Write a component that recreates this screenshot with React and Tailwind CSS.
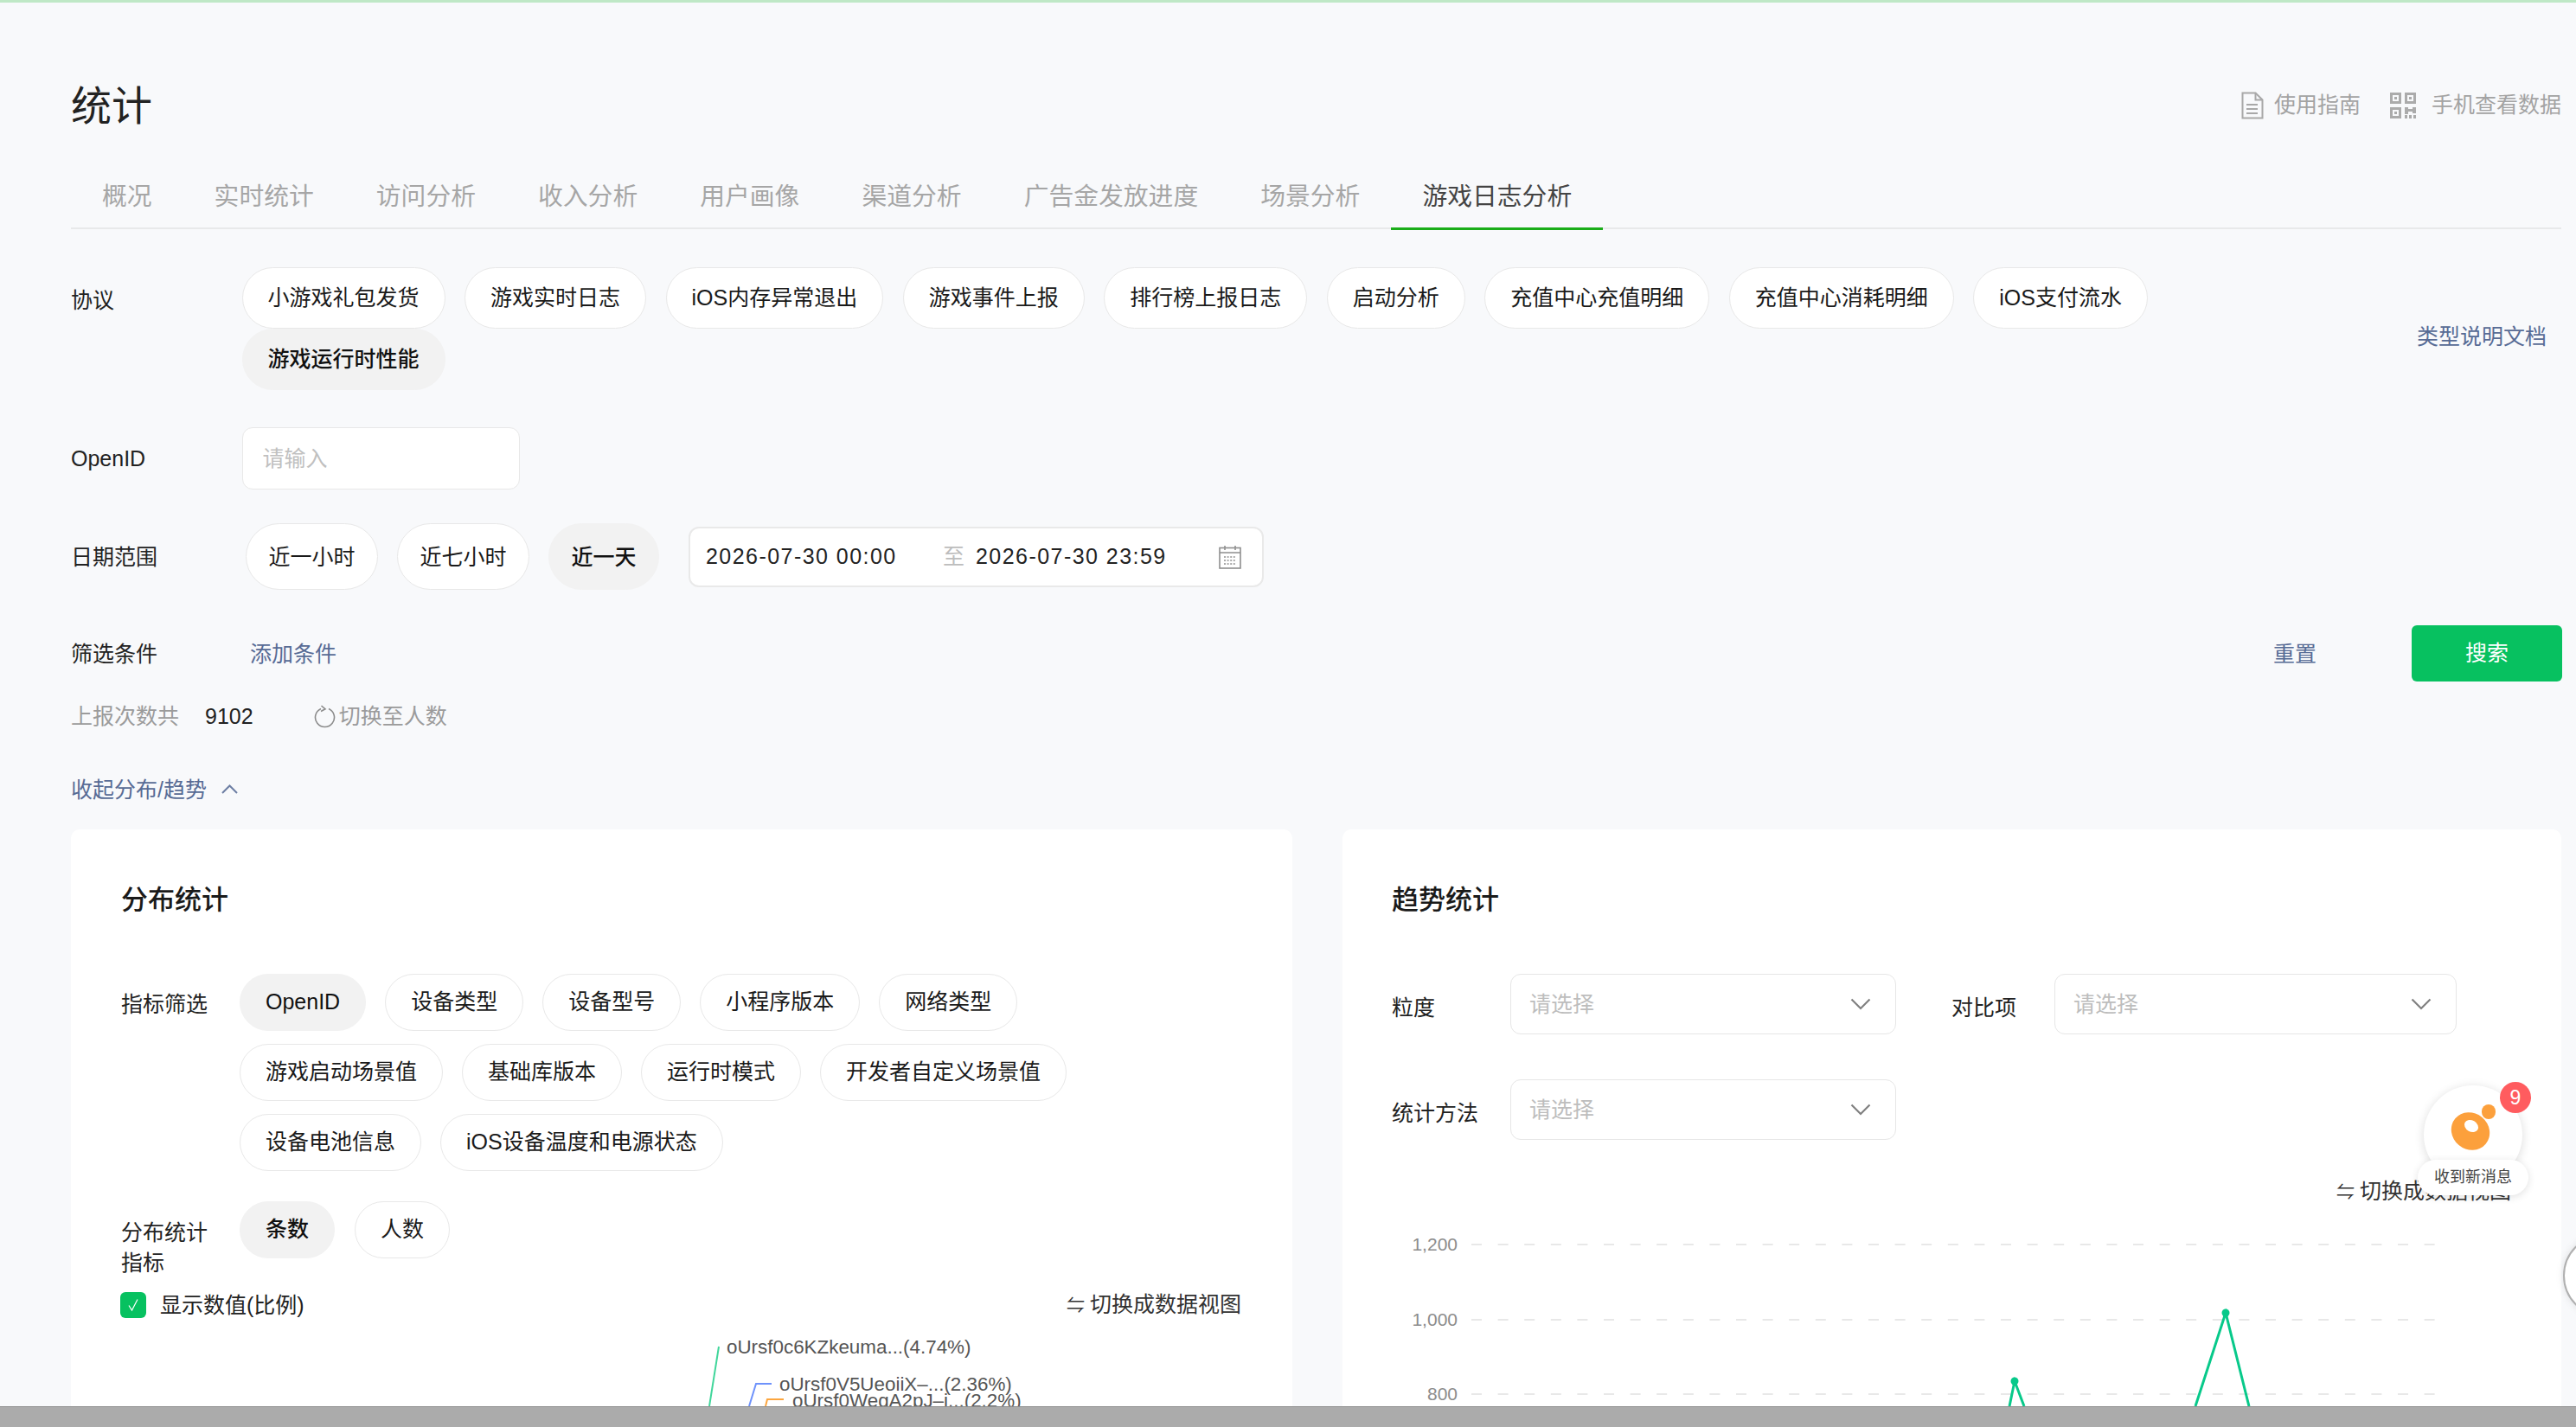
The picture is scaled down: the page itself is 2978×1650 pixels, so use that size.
const Pill = ({ children, active, className = "" }) => (
  <div
    className={`flex items-center justify-center rounded-full whitespace-nowrap text-[25px] px-[29px] ${
      active ? "bg-[#f2f2f2] border border-[#f2f2f2] font-medium text-[#111]" : "bg-white border border-[#e8e8e8] text-[#1a1a1a]"
    } ${className}`}
  >
    {children}
  </div>
);

const tabs = ["概况", "实时统计", "访问分析", "收入分析", "用户画像", "渠道分析", "广告金发放进度", "场景分析", "游戏日志分析"];
const protocols = ["小游戏礼包发货", "游戏实时日志", "iOS内存异常退出", "游戏事件上报", "排行榜上报日志", "启动分析", "充值中心充值明细", "充值中心消耗明细", "iOS支付流水", "游戏运行时性能"];
const metrics = ["OpenID", "设备类型", "设备型号", "小程序版本", "网络类型", "游戏启动场景值", "基础库版本", "运行时模式", "开发者自定义场景值", "设备电池信息", "iOS设备温度和电源状态"];

const Chevron = () => (
  <svg width="24" height="14" viewBox="0 0 24 14" fill="none" stroke="#808080" strokeWidth="2.2">
    <path d="M1.5 1.5 12 12 22.5 1.5" />
  </svg>
);

const Select = ({ w }) => (
  <div className={`flex items-center justify-between h-[70px] bg-white border border-[#e6e6e6] rounded-[12px] pl-[21px] pr-[28px] text-[25px] text-[#bdbdbd] ${w}`}>
    <span className="pt-[1px]">请选择</span>
    <Chevron />
  </div>
);

const Toggle = ({ className = "" }) => (
  <div className={`flex items-center text-[25px] text-[#333] whitespace-nowrap ${className}`}>
    <span className="text-[21px] mr-[6px]">⇋</span>
    <span>切换成数据视图</span>
  </div>
);

export default function App() {
  return (
    <div
      className="relative flex flex-col h-[1650px] w-full overflow-hidden bg-[#f8f9fb] text-[25px] text-[#222]"
      style={{ fontFamily: '"Liberation Sans","Noto Sans CJK SC",sans-serif' }}
    >
      <div className="h-[3px] bg-[#bfe8c6] shrink-0" />
      <main className="flex-1 min-h-0 overflow-hidden pl-[82px] pr-[17px]">
        <div className="flex items-center justify-between mt-[86px] h-[66px]">
          <h1 className="text-[47px] text-[#222] font-normal pt-[2px]">统计</h1>
          <div className="flex items-center text-[25px] text-[#a3a3a3]">
            <svg className="ml-[2px]" width="26" height="32" viewBox="0 0 26 32" fill="none" stroke="#a8a8a8" strokeWidth="2">
              <path d="M1.5 1.5h15l8 8v21h-23z" />
              <path d="M16.5 1.5v8h8" />
              <path d="M6 15h13M6 20h13M6 25h13" />
            </svg>
            <span className="ml-[12px]">使用指南</span>
            <svg className="ml-[34px]" width="30" height="30" viewBox="0 0 30 30" fill="#ababab">
              <path fillRule="evenodd" d="M0 0h13v13H0zM3 3v7h7V3zM17 0h13v13H17zM20 3v7h7V3zM0 17h13v13H0zM3 20v7h7v-7z" />
              <path d="M5 5h3v3H5zM22 5h3v3h-3zM5 22h3v3H5zM17 17h4v8h-4zM21 19h5v3h-5zM26 17h4v7h-4zM22 26h3v4h-3zM27 26h3v4h-3zM17 26h3v4h-3z" />
            </svg>
            <span className="ml-[18px]">手机查看数据</span>
          </div>
        </div>

        <div className="flex mt-[35px] h-[75px] border-b-2 border-[#e8e9ea]">
          {tabs.map((t, i) => {
            const active = i === tabs.length - 1;
            return (
              <div
                key={t}
                className={`h-[76px] px-[36px] leading-[74px] text-[28.8px] whitespace-nowrap ${
                  active ? "border-b-[3px] border-[#1aad19] text-[#444]" : "text-[#a6a6a6]"
                }`}
              >
                {t}
              </div>
            );
          })}
        </div>

        <div className="flex mt-[44px]">
          <div className="w-[197.5px] shrink-0 h-[71px] leading-[76px]">协议</div>
          <div className="flex flex-wrap w-[2330px] gap-x-[22.5px]">
            {protocols.map((p, i) => (
              <Pill key={p} active={i === protocols.length - 1} className="h-[71px] pt-[1px]">
                {p}
              </Pill>
            ))}
          </div>
          <a className="ml-auto mr-[17px] self-center mt-[20px] text-[#576b95] whitespace-nowrap">类型说明文档</a>
        </div>

        <div className="flex items-center mt-[43px] h-[72px]">
          <div className="w-[197.5px] shrink-0 pt-[2px]">OpenID</div>
          <div className="flex items-center w-[321px] h-[72px] bg-white border border-[#e8e8e8] rounded-[12px] pl-[23px] pt-[2px] text-[#c0c0c0]">请输入</div>
        </div>

        <div className="flex items-center mt-[39px] h-[77px]">
          <div className="w-[202px] shrink-0 pt-[2px]">日期范围</div>
          <div className="flex gap-x-[22px]">
            <Pill className="h-[77px] w-[153px] !px-0 pt-[2px]">近一小时</Pill>
            <Pill className="h-[77px] w-[153px] !px-0 pt-[2px]">近七小时</Pill>
            <Pill active className="h-[77px] w-[128px] !px-0 pt-[2px]">近一天</Pill>
          </div>
          <div className="flex items-center ml-[34px] w-[665px] h-[70px] bg-white border-2 border-[#e9e9e9] rounded-[12px] pl-[18px] pr-[24px] pt-[1px]">
            <span className="w-[274px] tracking-[1.45px] whitespace-nowrap text-[#222]">2026-07-30 00:00</span>
            <span className="w-[38px] text-[#bdbdbd]">至</span>
            <span className="tracking-[1.45px] whitespace-nowrap text-[#222]">2026-07-30 23:59</span>
            <svg className="ml-auto" width="26" height="28" viewBox="0 0 26 28" fill="none" stroke="#8f8f8f" strokeWidth="1.6">
              <rect x="1" y="3.5" width="24" height="23.5" />
              <path d="M1 9h24M7 1v5M19 1v5" />
              <path d="M6 14h14M6 18h14M6 22h14" strokeDasharray="2 1.6" />
            </svg>
          </div>
        </div>

        <div className="flex items-center mt-[41px] h-[65px]">
          <div className="w-[207px] shrink-0 pt-[2px]">筛选条件</div>
          <a className="text-[#576b95] pt-[2px]">添加条件</a>
          <a className="ml-auto text-[#576b95] pt-[2px]">重置</a>
          <button className="ml-[110px] -mr-[1px] w-[174px] h-[65px] rounded-[6px] bg-[#07c160] text-white text-[25px]">搜索</button>
        </div>

        <div className="flex items-center mt-[20px] h-[40px] pt-[2px]">
          <span className="text-[#9b9b9b]">上报次数共</span>
          <span className="ml-[30px]">9102</span>
          <svg className="ml-[70px]" width="25" height="28" viewBox="0 0 25 28" fill="none" stroke="#8c8c8c" strokeWidth="1.6">
            <path d="M8 4.5a11 11 0 1 0 9 0" />
            <path d="M8.5 1 13 4.8 8 7.5" />
          </svg>
          <span className="ml-[4px] text-[#9b9b9b]">切换至人数</span>
        </div>

        <div className="flex items-center mt-[45px] h-[40px] pt-[2px] text-[#576b95]">
          <span>收起分布/趋势</span>
          <svg className="ml-[17px] -mt-[4px]" width="19" height="11" viewBox="0 0 19 11" fill="none" stroke="#6d7ea3" strokeWidth="2">
            <path d="M1 10 9.5 1.5 18 10" />
          </svg>
        </div>

        <div className="flex gap-x-[58px] mt-[26px]">
          <section className="w-[1412px] h-[800px] shrink-0 bg-white rounded-[10px] pt-[61px] pl-[58px] pr-[59px]">
            <h2 className="text-[31px] leading-[42px] font-medium text-[#1a1a1a]">分布统计</h2>
            <div className="flex mt-[64px]">
              <div className="w-[137px] shrink-0 leading-[70px] h-[66px]">指标筛选</div>
              <div className="flex flex-wrap gap-x-[22px] gap-y-[15px] w-[1100px]">
                {metrics.map((m, i) => (
                  <Pill key={m} active={i === 0} className={`h-[66px] ${m === "开发者自定义场景值" ? "mr-[100px]" : ""}`}>
                    {m}
                  </Pill>
                ))}
              </div>
            </div>
            <div className="flex mt-[35px] h-[87px]">
              <div className="w-[137px] shrink-0 pt-[19px] leading-[35px]">
                分布统计
                <br />
                指标
              </div>
              <div className="flex gap-x-[23px]">
                <Pill active className="h-[66px] w-[110px] !px-0">条数</Pill>
                <Pill className="h-[66px] w-[110px] !px-0">人数</Pill>
              </div>
            </div>
            <div className="flex items-center justify-between mt-[18px] h-[30px]">
              <div className="flex items-center">
                <div className="flex items-center justify-center -ml-[1px] w-[30px] h-[30px] rounded-[6px] bg-[#07c160]">
                  <svg width="14" height="16" viewBox="0 0 14 16" fill="none" stroke="#fff" strokeWidth="1.2">
                    <path d="M2 8.5 5.5 14 12 1.5" />
                  </svg>
                </div>
                <span className="ml-[16px] pt-[2px]">显示数值(比例)</span>
              </div>
              <Toggle />
            </div>
            <svg className="block overflow-hidden" width="1295" height="102" viewBox="0 0 1295 102" fill="none">
              <path d="M691 33 680 102" stroke="#41d69b" strokeWidth="2" />
              <path d="M752 76H734L726 102" stroke="#6e92fb" strokeWidth="2" />
              <path d="M766 94H747L745 102" stroke="#fca63f" strokeWidth="2" />
              <g fill="#555" fontSize="22.4">
                <text x="700" y="41">oUrsf0c6KZkeuma...(4.74%)</text>
                <text x="761" y="84">oUrsf0V5UeoiiX–...(2.36%)</text>
                <text x="776" y="103">oUrsf0WegA2pJ–i...(2.2%)</text>
              </g>
            </svg>
          </section>

          <section className="flex-1 min-w-0 h-[800px] bg-white rounded-[10px] pt-[61px] pl-[57px] pr-[58px]">
            <h2 className="text-[31px] leading-[42px] font-medium text-[#1a1a1a]">趋势统计</h2>
            <div className="flex mt-[64px]">
              <div className="w-[137px] shrink-0 leading-[78px] h-[70px]">粒度</div>
              <Select w="w-[446px]" />
              <div className="ml-[64px] w-[119px] shrink-0 leading-[78px] h-[70px]">对比项</div>
              <Select w="w-[465px]" />
            </div>
            <div className="flex mt-[52px]">
              <div className="w-[137px] shrink-0 leading-[78px] h-[70px]">统计方法</div>
              <Select w="w-[446px]" />
            </div>
            <div className="flex justify-end items-center mt-[40px] h-[40px]">
              <Toggle />
            </div>
            <svg className="block overflow-hidden" width="1295" height="228" viewBox="0 0 1295 228" fill="none">
              <g fill="#8c8c8c" fontSize="21" textAnchor="end">
                <text x="76" y="48">1,200</text>
                <text x="76" y="135">1,000</text>
                <text x="76" y="221">800</text>
              </g>
              <g stroke="#e8e8e8" strokeWidth="2" strokeDasharray="12 18.6">
                <path d="M92 41H1210" />
                <path d="M92 128H1210" />
                <path d="M92 214H1210" />
              </g>
              <path d="M714 228 720 199 731 228M929 228 964 120 991 228" stroke="#07c98a" strokeWidth="3" />
              <circle cx="720" cy="199" r="4.5" fill="#07c98a" />
              <circle cx="964" cy="120" r="4.5" fill="#07c98a" />
            </svg>
          </section>
        </div>
      </main>
      <footer className="h-[24px] shrink-0 border-t border-[#8d8d8d] bg-[#ababab]" />

      <div className="absolute left-[2802px] top-[1255px] w-[114px] h-[114px] rounded-full bg-white shadow-[0_2px_12px_rgba(0,0,0,0.14)]">
        <svg className="absolute left-[31px] top-[30px]" width="48" height="46" viewBox="0 0 48 46" fill="none">
          <ellipse cx="23" cy="23" rx="23" ry="21" transform="rotate(40 23 23)" fill="#fca03c" />
          <ellipse cx="24" cy="17" rx="8.5" ry="6.5" transform="rotate(30 24 17)" fill="#fff" />
        </svg>
        <div className="absolute left-[67px] top-[22px] w-[16px] h-[17px] rounded-full bg-[#fca03c]" />
        <div className="absolute left-[88px] top-[-4px] flex items-center justify-center w-[36px] h-[36px] rounded-full bg-[#ff5c5f] text-white text-[23px]">9</div>
      </div>
      <div className="absolute left-[2795px] top-[1341px] flex items-center justify-center w-[128px] h-[41px] rounded-full bg-white shadow-[0_2px_10px_rgba(0,0,0,0.12)] text-[18px] text-[#444] whitespace-nowrap">
        收到新消息
      </div>
      <div className="absolute left-[2963px] top-[1427px] w-[96px] h-[96px] rounded-full bg-white border-2 border-[#b0b0b0] shadow-[0_0_10px_rgba(0,0,0,0.1)]" />
    </div>
  );
}
